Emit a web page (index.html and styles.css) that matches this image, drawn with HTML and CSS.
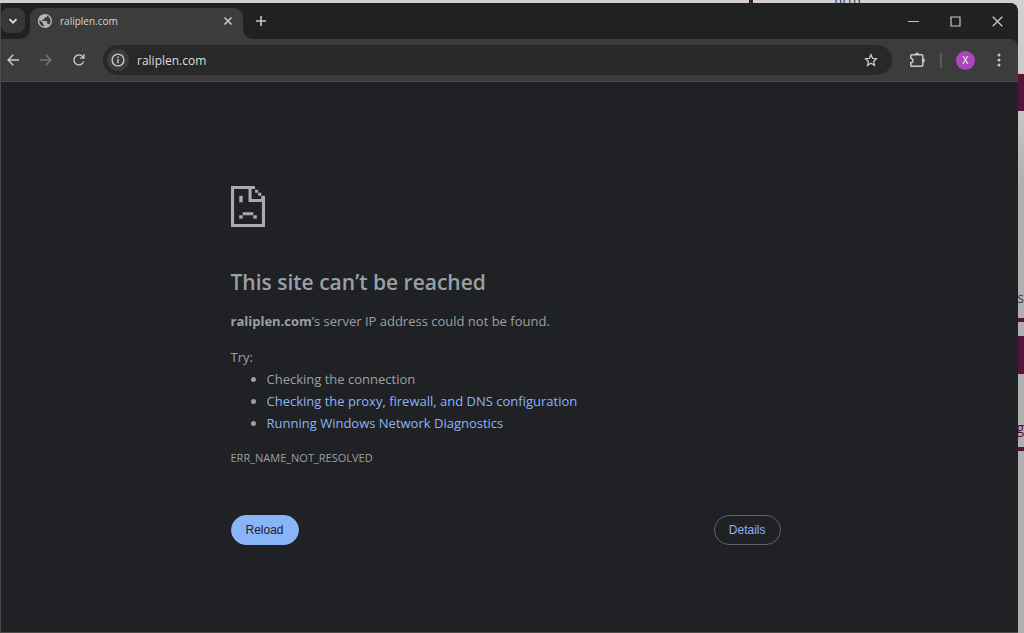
FILE: index.html
```html
<!DOCTYPE html>
<html lang="en">
<head>
    <meta charset="UTF-8">
    <meta name="viewport" content="width=device-width, initial-scale=1.0">
    <title>raliplen.com</title>
    <link rel="stylesheet" href="styles.css">
</head>
<body>
    <!-- Page that shows behind the browser window -->
    <div class="backdrop">
        <span class="speck speck-top"></span>
        <span class="word word-top">firm</span>
        <span class="speck block-one"></span>
        <span class="word word-s">s</span>
        <span class="speck line-one"></span>
        <span class="speck block-two"></span>
        <span class="word word-g">g</span>
        <span class="speck line-two"></span>
    </div>

    <div class="window">
        <header class="tab-strip">
            <button class="tab-search" type="button" aria-label="Search tabs">
                <svg width="10" height="10" viewBox="0 0 10 10"><path d="M1.5 3.2 5 6.7l3.5-3.5" fill="none" stroke="currentColor" stroke-width="1.8"/></svg>
            </button>
            <div class="tab">
                <svg class="globe" width="14" height="14" viewBox="2 2 20 20"><path fill="currentColor" d="M12 2C6.48 2 2 6.48 2 12s4.48 10 10 10 10-4.48 10-10S17.52 2 12 2zm-1 17.93c-3.95-.49-7-3.85-7-7.93 0-.62.08-1.21.21-1.79L9 15v1c0 1.1.9 2 2 2v1.93zm6.9-2.54c-.26-.81-1-1.39-1.9-1.39h-1v-3c0-.55-.45-1-1-1H8v-2h2c.55 0 1-.45 1-1V7h2c1.1 0 2-.9 2-2v-.41c2.93 1.19 5 4.06 5 7.41 0 2.08-.8 3.97-2.1 5.39z"/></svg>
                <span class="tab-title">raliplen.com</span>
                <button class="icon-button" type="button" aria-label="Close tab">
                    <svg width="10" height="10" viewBox="0 0 10 10"><path d="m1.5 1.5 7 7m0-7-7 7" stroke="currentColor" stroke-width="1.6"/></svg>
                </button>
            </div>
            <button class="icon-button new-tab" type="button" aria-label="New tab">
                <svg width="10" height="10" viewBox="0 0 10 10"><path d="M5 0v10M0 5h10" stroke="currentColor" stroke-width="1.6"/></svg>
            </button>
            <div class="window-controls">
                <button class="icon-button" type="button" aria-label="Minimize">
                    <svg width="11" height="11" viewBox="0 0 11 11"><path d="M0 5.5h11" stroke="currentColor"/></svg>
                </button>
                <button class="icon-button" type="button" aria-label="Maximize">
                    <svg width="11" height="11" viewBox="0 0 11 11"><path d="M1 1h9v9H1z" fill="none" stroke="currentColor" stroke-width="1.2"/></svg>
                </button>
                <button class="icon-button" type="button" aria-label="Close">
                    <svg width="11" height="11" viewBox="0 0 11 11"><path d="m.7.7 9.6 9.6m0-9.6L.7 10.3" stroke="currentColor" stroke-width="1.3"/></svg>
                </button>
            </div>
        </header>

        <nav class="toolbar">
            <div class="nav-buttons">
                <button class="icon-button" type="button" aria-label="Back">
                    <svg width="12" height="12" viewBox="0 0 12 12"><path d="M12 6H1.2M6.3.8 1.1 6l5.2 5.2" fill="none" stroke="currentColor" stroke-width="1.4"/></svg>
                </button>
                <button class="icon-button" type="button" aria-label="Forward" disabled>
                    <svg width="12" height="12" viewBox="0 0 12 12"><path d="M0 6h10.8M5.7.8 10.9 6l-5.2 5.2" fill="none" stroke="currentColor" stroke-width="1.4"/></svg>
                </button>
                <button class="icon-button" type="button" aria-label="Reload page">
                    <svg width="12" height="12" viewBox="0 0 12 12"><path d="M10.7 7.4A5 5 0 1 1 9.8 2.7L11 4" fill="none" stroke="currentColor" stroke-width="1.4"/><path d="M11.6 0v4.8H6.9V3.5h3.4V0z" fill="currentColor"/></svg>
                </button>
            </div>
            <div class="address-bar">
                <button class="icon-button site-info" type="button" aria-label="View site information">
                    <svg width="14" height="14" viewBox="0 0 14 14"><circle cx="7" cy="7" r="5.9" fill="none" stroke="currentColor" stroke-width="1.4"/><path d="M7 6v4.2M7 3.6v1.5" stroke="currentColor" stroke-width="1.4"/></svg>
                </button>
                <input class="address" type="text" value="raliplen.com" aria-label="Address">
                <button class="icon-button" type="button" aria-label="Bookmark this tab">
                    <svg width="14" height="14" viewBox="0 0 14 14"><path d="m7 1.7 1.6 3.7 4 .3-3 2.7.9 3.9L7 10.2l-3.5 2.1.9-3.9-3-2.7 4-.3z" fill="none" stroke="currentColor" stroke-width="1.3"/></svg>
                </button>
            </div>
            <div class="actions">
                <button class="icon-button" type="button" aria-label="Extensions">
                    <svg width="16" height="16" viewBox="0 0 16 16"><path d="M1.7 2.8h10.1q1 0 1 1v9.4q0 1-1 1H1.7q-.9 0-.9-1v-2.5a2.2 2.2 0 0 0 0-4.4V3.8q0-1 .9-1z" fill="none" stroke="currentColor" stroke-width="1.5"/><path d="M5 2.6a2 2 0 0 1 4 0zM13 6.6a2 2 0 0 1 0 4z" fill="currentColor"/></svg>
                </button>
                <span class="divider"></span>
                <button class="avatar" type="button">X</button>
                <button class="icon-button menu" type="button" aria-label="Menu">
                    <svg width="4" height="14" viewBox="0 0 4 14" fill="currentColor"><circle cx="2" cy="2" r="1.5"/><circle cx="2" cy="7" r="1.5"/><circle cx="2" cy="12" r="1.5"/></svg>
                </button>
            </div>
        </nav>

        <main class="page">
            <div class="error">
                <svg class="sad-page" width="34" height="41" viewBox="0 0 99 123" preserveAspectRatio="none" fill="currentColor">
                    <path d="M0 0h70v9H9v105h81V48H51V9h9v30h39v84H0z"/>
                    <path d="M70 11h9v9h-9zM79 20h9v9h-9zM88 29h11v12H88z"/>
                    <path d="M24 29h10v20H24zM34 79h31v9H34zM24 88h10v10H24zM65 88h10v10H65z"/>
                </svg>
                <h1>This site can’t be reached</h1>
                <p><strong>raliplen.com</strong>’s server IP address could not be found.</p>
                <div class="suggestions">
                    <p>Try:</p>
                    <ul>
                        <li>Checking the connection</li>
                        <li><a href="#buttons">Checking the proxy, firewall, and DNS configuration</a></li>
                        <li><a href="#diagnostics">Running Windows Network Diagnostics</a></li>
                    </ul>
                </div>
                <p class="error-code">ERR_NAME_NOT_RESOLVED</p>
                <div class="buttons" id="buttons">
                    <button class="button reload" type="button">Reload</button>
                    <button class="button details" type="button">Details</button>
                </div>
            </div>
        </main>
    </div>
</body>
</html>
```

FILE: styles.css
```css
* {
    box-sizing: border-box;
}

body {
    margin: 0;
    min-height: 100vh;
    padding: 3px 6px 0 0;
    display: flex;
    position: relative;
    overflow: hidden;
    background-color: #b9b8b8;
    font-family: "Open Sans", "Noto Sans", sans-serif;
    font-size: 13px;
}

button {
    padding: 0;
    border: 0;
    background: none;
    font-family: inherit;
    cursor: pointer;
}

svg {
    display: block;
}

/* Backdrop */
.backdrop {
    position: absolute;
    inset: 0;
    overflow: hidden;
    background: linear-gradient(#d2d1d2, #c8c7c8 110px, #b2b1b1 180px, #b0afaf);
}

.speck {
    position: absolute;
    right: 0;
    width: 6px;
    background-color: #541338;
}

.speck-top {
    top: 0;
    right: 271px;
    width: 4px;
    height: 3px;
}

.block-one {
    top: 74px;
    height: 37px;
}

.line-one {
    top: 318px;
    height: 4px;
}

.block-two {
    top: 336px;
    height: 38px;
}

.line-two {
    top: 447px;
    height: 4px;
}

.word {
    position: absolute;
    color: #3a3a48;
    font-size: 14px;
    line-height: 16px;
}

.word-top {
    top: -9px;
    right: 163px;
}

.word-s {
    top: 290px;
    right: 0;
}

.word-g {
    top: 420px;
    right: 0;
    color: #541338;
}

/* Browser window */
.window {
    position: relative;
    flex: 1;
    display: flex;
    flex-direction: column;
    overflow: hidden;
    border-left: 1px solid #4a4b4b;
    border-bottom: 1px solid #4a4b4b;
    border-radius: 0 8px 0 0;
    background-color: #202124;
}

.icon-button {
    display: flex;
    align-items: center;
    justify-content: center;
    color: #c8c8c8;
}

.icon-button:disabled {
    color: #777;
}

.tab-strip {
    display: flex;
    height: 36px;
    background-color: #202221;
}

.tab-search {
    display: flex;
    align-items: center;
    justify-content: center;
    width: 24px;
    height: 25px;
    margin-top: 5px;
    border-radius: 8px;
    background-color: #363736;
    color: #e0e0e0;
}

.tab {
    position: relative;
    display: flex;
    align-items: center;
    gap: 8px;
    width: 213px;
    margin: 5px 0 0 5px;
    padding: 0 10px 6px 8px;
    border-radius: 9px 9px 0 0;
    background-color: #3c3c3c;
}

/* curved feet of the active tab */
.tab::before,
.tab::after {
    content: "";
    position: absolute;
    bottom: 0;
    width: 9px;
    height: 9px;
}

.tab::before {
    right: 100%;
    background: radial-gradient(circle at 0 0, transparent 8px, #3c3c3c 9px);
}

.tab::after {
    left: 100%;
    background: radial-gradient(circle at 100% 0, transparent 8px, #3c3c3c 9px);
}

.globe {
    color: #b5b5b5;
}

.tab-title {
    flex: 1;
    color: #d6d6d6;
    font-size: 10px;
}

.new-tab {
    width: 36px;
}

.window-controls {
    display: flex;
    margin-left: auto;
}

.window-controls .icon-button {
    width: 42px;
}

.toolbar {
    display: flex;
    align-items: center;
    gap: 12px;
    height: 43px;
    padding-right: 9px;
    border-bottom: 1px solid #4b4b4b;
    border-radius: 0 8px 0 0;
    background-color: #3c3c3c;
}

.nav-buttons {
    display: flex;
    gap: 21px;
    padding: 0 6px;
}

.address-bar {
    flex: 1;
    display: flex;
    align-items: center;
    height: 30px;
    padding: 0 14px 0 4px;
    border-radius: 15px;
    background-color: #282828;
}

.site-info {
    width: 22px;
    height: 22px;
    border-radius: 50%;
    background-color: #3c3c3c;
}

.address {
    flex: 1;
    min-width: 0;
    padding: 0 8px;
    border: 0;
    outline: 0;
    background: none;
    color: #dedede;
    font-family: inherit;
    font-size: 12px;
}

.actions {
    display: flex;
    align-items: center;
    gap: 14px;
    padding-left: 6px;
}

.divider {
    width: 2px;
    height: 15px;
    background-color: #5c5c5c;
}

.avatar {
    width: 19px;
    height: 19px;
    border-radius: 50%;
    background-color: #ab47bc;
    color: #fff;
    font-size: 10px;
}

.menu {
    width: 20px;
}

/* Error page */
.page {
    flex: 1;
    padding: 104px 24px 0 16px;
    color: #9aa0a6;
    line-height: 22px;
}

.error {
    max-width: 550px;
    margin: 0 auto;
}

.sad-page {
    color: #aaa;
}

h1 {
    margin: 39px 0 12px;
    font-size: 21px;
    font-weight: 600;
    line-height: 32px;
}

p {
    margin: 0;
}

.suggestions {
    margin-top: 14px;
}

ul {
    margin: 0;
    padding-left: 36px;
}

a {
    color: #8ab4f8;
    text-decoration: none;
}

.error .error-code {
    margin-top: 13px;
    font-size: 11px;
}

.buttons {
    display: flex;
    justify-content: space-between;
    margin-top: 46px;
}

.button {
    height: 30px;
    padding: 0 14px;
    border: 1px solid #5f6368;
    border-radius: 15px;
    color: #8ab4f8;
    font-family: "Liberation Sans", Arial, sans-serif;
    font-size: 12px;
}

.reload {
    border-color: #8ab4f8;
    background-color: #8ab4f8;
    color: #202124;
}
```
